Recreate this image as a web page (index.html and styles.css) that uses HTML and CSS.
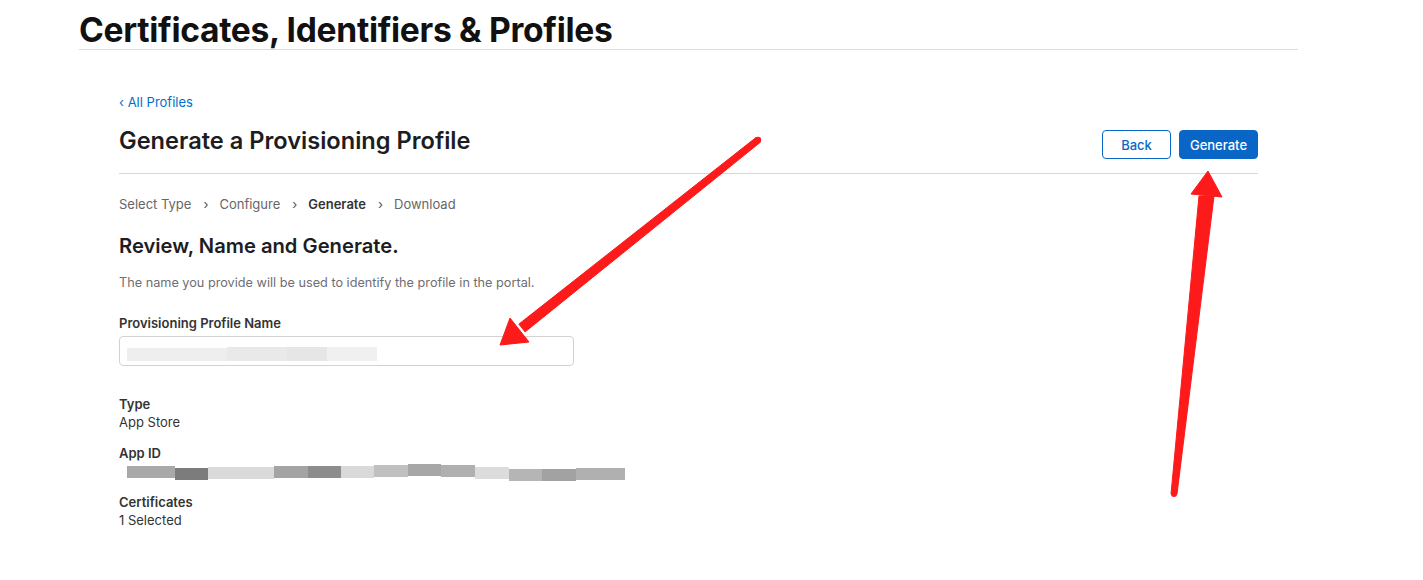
FILE: index.html
```html
<!DOCTYPE html>
<html>
<head>
<meta charset="utf-8">
<link rel="stylesheet" href="styles.css">
</head>
<body>
<div class="page">
  <header class="top">
    <h1 class="title">Certificates, Identifiers &amp; Profiles</h1>
  </header>
  <main class="content">
    <a class="back-link" href="#">‹ All Profiles</a>
    <div class="head-row">
      <h2 class="page-title">Generate a Provisioning Profile</h2>
      <div class="actions">
        <button class="btn btn-outline">Back</button>
        <button class="btn btn-primary">Generate</button>
      </div>
    </div>
    <nav class="steps">
      <span>Select Type</span><span class="chev">›</span>
      <span>Configure</span><span class="chev">›</span>
      <span class="current">Generate</span><span class="chev">›</span>
      <span>Download</span>
    </nav>
    <h3 class="section-title">Review, Name and Generate.</h3>
    <p class="desc">The name you provide will be used to identify the profile in the portal.</p>
    <label class="field-label">Provisioning Profile Name</label>
    <div class="input">
      <span class="redact-light"><i class="r1"></i><i class="r2"></i><i class="r3"></i><i class="r4"></i></span>
    </div>
    <dl class="details">
      <dt>Type</dt>
      <dd>App Store</dd>
      <dt>App ID</dt>
      <dd class="redact-row">
        <i style="background:#a9a9a9;width:48px"></i><i style="background:#7c7c7c;width:33px;transform:translateY(2px)"></i><i style="background:#dadada;width:66px;transform:translateY(1px)"></i><i style="background:#a4a4a4;width:34px"></i><i style="background:#8d8d8d;width:33px"></i><i style="background:#d9d9d9;width:33px"></i><i style="background:#c0c0c0;width:34px;transform:translateY(-1px)"></i><i style="background:#a7a7a7;width:33px;transform:translateY(-2px)"></i><i style="background:#b0b0b0;width:34px;transform:translateY(-1px)"></i><i style="background:#dcdcdc;width:34px;transform:translateY(1px)"></i><i style="background:#b5b5b5;width:33px;transform:translateY(3px)"></i><i style="background:#a2a2a2;width:34px;transform:translateY(3px)"></i><i style="background:#b0b0b0;width:49px;transform:translateY(2px)"></i>
      </dd>
      <dt>Certificates</dt>
      <dd>1 Selected</dd>
    </dl>
  </main>
</div>
<svg class="arrows" width="1423" height="580" viewBox="0 0 1423 580">
  <g fill="#fd1a1a" stroke="#fd1a1a" stroke-linejoin="round">
    <polygon stroke-width="1" points="760,142.5 756,137.5 518.9,324.1 525.1,331.9"/>
    <polygon stroke-width="1" points="500,345 510,318 529,342"/>
    <polygon stroke-width="1" points="1199,196 1214,196 1177,494 1171,494"/>
    <polygon stroke-width="1" points="1208,171 1191,194 1222,197"/>
  </g>
  <circle cx="758" cy="140" r="3.2" fill="#fd1a1a"/>
  <circle cx="1174" cy="494" r="3" fill="#fd1a1a"/>
</svg>
</body>
</html>
```
FILE: styles.css
```css
* { box-sizing: border-box; }
body {
  margin: 0;
  background: #fff;
  font-family: Inter, "Noto Sans", "Liberation Sans", sans-serif;
  color: #1d1d1f;
}
.page {
  width: 1219px;
  margin-left: 79px;
}
.top {
  border-bottom: 1px solid #dcdcdc;
  height: 50px;
}
.title {
  margin: 0;
  padding-top: 10px;
  font-size: 33.6px;
  line-height: 40px;
  font-weight: 700;
  letter-spacing: -0.3px;
  color: #111;
}
.content {
  padding: 0 40px;
}
.back-link {
  display: block;
  margin-top: 44px;
  font-size: 13px;
  line-height: 16px;
  color: #0070c9;
  text-decoration: none;
}
.head-row {
  display: flex;
  justify-content: space-between;
  align-items: flex-start;
  border-bottom: 1px solid #d6d6d6;
  height: 64px;
  padding-top: 16px;
}
.page-title {
  margin: 0;
  font-size: 23.6px;
  line-height: 30px;
  font-weight: 600;
  color: #1d1d1f;
}
.actions {
  display: flex;
  gap: 8px;
  padding-top: 4px;
}
.btn {
  font-family: inherit;
  font-size: 13px;
  font-weight: 500;
  height: 29px;
  border-radius: 4px;
  padding: 0;
  cursor: pointer;
}
.btn-outline {
  width: 69px;
  background: #fff;
  color: #0a68c6;
  border: 1px solid #0a68c6;
}
.btn-primary {
  width: 79px;
  background: #0a66c6;
  color: #fff;
  border: 1px solid #0a66c6;
}
.steps {
  display: flex;
  margin-top: 22px;
  font-size: 13px;
  line-height: 16px;
  color: #666;
}
.steps .chev {
  margin: 0 11px 0 12px;
  color: #555;
}
.steps .current {
  font-weight: 600;
  color: #333;
}
.section-title {
  margin: 22px 0 0;
  font-size: 20.2px;
  line-height: 24px;
  font-weight: 600;
  color: #1d1d1f;
}
.desc {
  margin: 17px 0 0;
  font-size: 12.7px;
  line-height: 16px;
  color: #6e6e73;
}
.field-label {
  display: block;
  margin-top: 24px;
  font-size: 13px;
  line-height: 16px;
  font-weight: 600;
  color: #333;
}
.input {
  margin-top: 5px;
  width: 455px;
  height: 30px;
  border: 1px solid #d2d2d2;
  border-radius: 4px;
  display: flex;
  align-items: center;
  padding-left: 7px;
}
.redact-light {
  display: flex;
  align-items: center;
}
.redact-light i {
  display: block;
  height: 14px;
  background: #eeeeee;
}
.redact-light .r1 { width: 100px; height: 13px; transform: translateY(3px); }
.redact-light .r2 { width: 60px; background: #e9e9e9; transform: translateY(3px); }
.redact-light .r3 { width: 40px; background: #e6e6e6; transform: translateY(3px);}
.redact-light .r4 { width: 50px; background: #f0f0f0; transform: translateY(3px); }
.details {
  margin: 29px 0 0;
}
.details dt {
  font-size: 13px;
  line-height: 18px;
  font-weight: 600;
  color: #333;
}
.details dd {
  margin: 0 0 13px;
  font-size: 13px;
  line-height: 18px;
  color: #333;
}
.redact-row {
  display: flex;
  padding-left: 8px;
  height: 18px;
  align-items: flex-end;
}
.redact-row i {
  display: block;
  height: 12px;
  margin-bottom: 2px;
}
.arrows {
  position: absolute;
  left: 0;
  top: 0;
  pointer-events: none;
}
```
